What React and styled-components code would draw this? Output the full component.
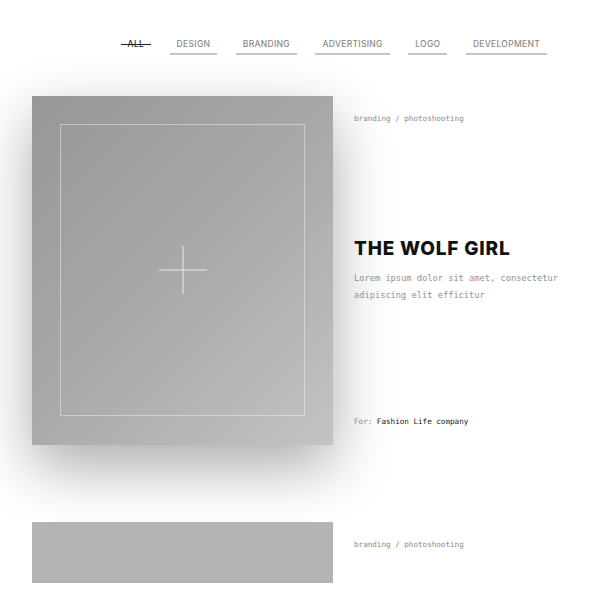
import styled, { createGlobalStyle } from "styled-components";

const GlobalStyle = createGlobalStyle`
  html, body {
    margin: 0;
    padding: 0;
    background: #ffffff;
    overflow: hidden;
  }
  body {
    font-family: "Open Sans", "Liberation Sans", sans-serif;
  }
`;

const Page = styled.div`
  width: 600px;
  height: 600px;
  overflow: hidden;
`;

const Nav = styled.nav`
  display: flex;
  justify-content: flex-end;
  gap: 18.5px;
  padding: 38px 53px 0 0;
`;

const NavItem = styled.a`
  position: relative;
  padding: 0 7px 3px;
  font-family: "Inter", "Liberation Sans", sans-serif;
  font-size: 8.5px;
  font-weight: 500;
  letter-spacing: 0.3px;
  line-height: 12px;
  text-transform: uppercase;
  color: ${(p) => (p.$active ? "#222" : "#8a8a8a")};
  border-bottom: 2px solid ${(p) => (p.$active ? "transparent" : "#c4c4c4")};
  cursor: pointer;

  &::after {
    content: "";
    display: ${(p) => (p.$active ? "block" : "none")};
    position: absolute;
    left: 0;
    right: 0;
    top: 6px;
    height: 1px;
    background: #222;
  }
`;

const List = styled.div`
  display: flex;
  flex-direction: column;
  gap: 77px;
  padding: 41px 0 0 32px;
`;

const Row = styled.article`
  display: flex;
  gap: 21px;
`;

const Cover = styled.div`
  flex: 0 0 301px;
  height: ${(p) => p.$height}px;
  box-sizing: border-box;
  display: flex;
  padding: 28px 28px 29px 28px;
  background: ${(p) =>
    p.$featured
      ? "linear-gradient(135deg, #979797 0%, #a9a9a9 50%, #c3c3c3 100%)"
      : "#b4b4b4"};
  box-shadow: ${(p) =>
    p.$featured ? "0 22px 55px rgba(0, 0, 0, 0.33)" : "none"};
`;

const Frame = styled.div`
  flex: 1;
  display: flex;
  align-items: center;
  justify-content: center;
  border: 1px solid rgba(255, 255, 255, 0.4);
`;

const Info = styled.div`
  flex: 1;
  display: flex;
  flex-direction: column;
  justify-content: space-between;
  padding: 17px 0 17px;
`;

const Mono = styled.div`
  font-family: "DejaVu Sans Mono", "Liberation Mono", monospace;
  font-size: 7.6px;
  line-height: 12px;
  color: #8b8b8b;
`;

const Title = styled.h2`
  margin: 0 0 9px;
  font-family: "Inter", "Liberation Sans", sans-serif;
  font-size: 19px;
  font-weight: 800;
  letter-spacing: 0.8px;
  line-height: 24px;
  color: #111;
`;

const Excerpt = styled.p`
  margin: 0;
  font-family: "DejaVu Sans Mono", "Liberation Mono", monospace;
  font-size: 8.7px;
  line-height: 17px;
  color: #8c929b;
`;

const Client = styled.span`
  color: #1a1a1a;
`;

function Plus() {
  return (
    <svg width="50" height="50" viewBox="0 0 50 50">
      <path d="M25 1v48M1 25h48" stroke="#ebebeb" strokeWidth="1" />
    </svg>
  );
}

const filters = ["All", "Design", "Branding", "Advertising", "Logo", "Development"];

function App() {
  return (
    <Page>
      <GlobalStyle />
      <Nav>
        {filters.map((f, i) => (
          <NavItem key={f} $active={i === 0}>
            {f}
          </NavItem>
        ))}
      </Nav>
      <List>
        <Row>
          <Cover $featured $height={349}>
            <Frame>
              <Plus />
            </Frame>
          </Cover>
          <Info>
            <Mono>branding / photoshooting</Mono>
            <div>
              <Title>THE WOLF GIRL</Title>
              <Excerpt>
                Lorem ipsum dolor sit amet, consectetur
                <br />
                adipiscing elit efficitur
              </Excerpt>
            </div>
            <Mono>
              For: <Client>Fashion Life company</Client>
            </Mono>
          </Info>
        </Row>
        <Row>
          <Cover $height={61} />
          <Info>
            <Mono>branding / photoshooting</Mono>
          </Info>
        </Row>
      </List>
    </Page>
  );
}

export default App;
